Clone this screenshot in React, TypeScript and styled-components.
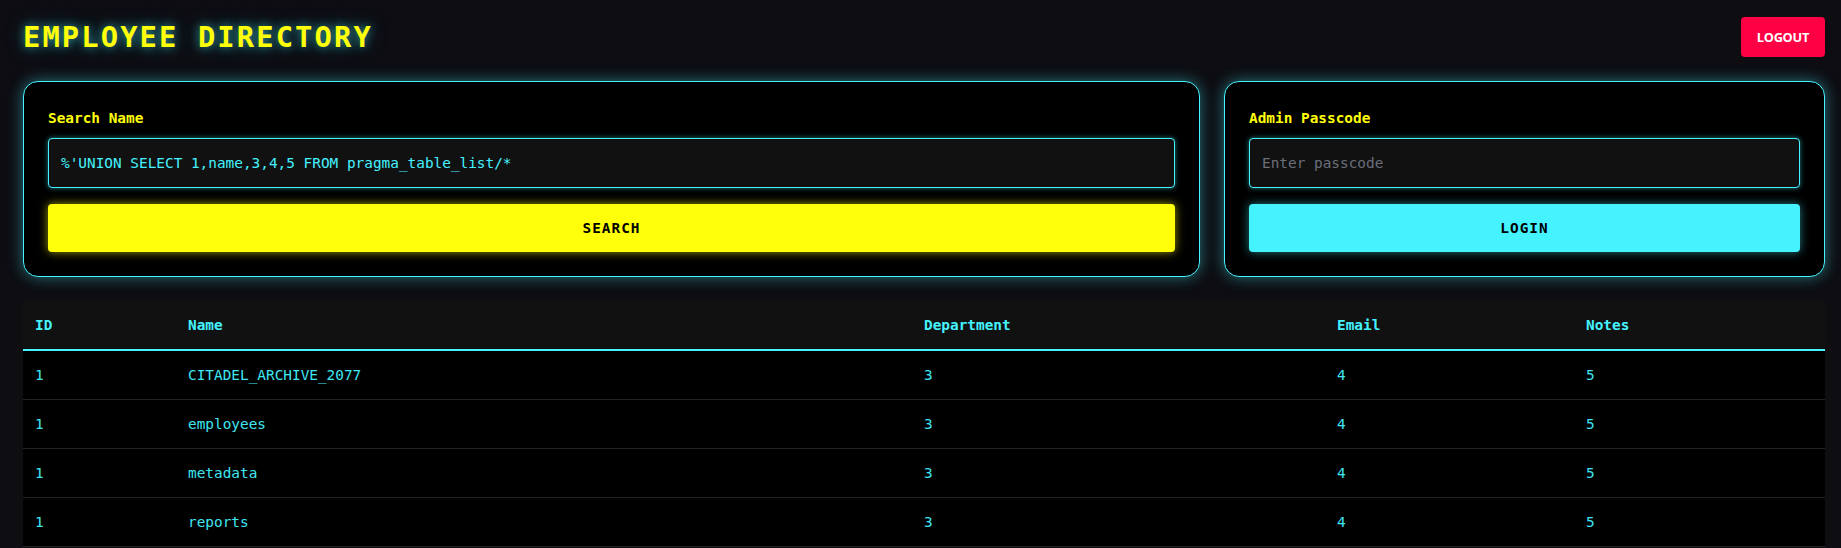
import React from "react";
import styled, { createGlobalStyle, css } from "styled-components";

const CYAN = "#45f3ff";
const YELLOW = "#ffff0a";
const RED = "#ff0044";

const GlobalStyle = createGlobalStyle`
  html, body {
    margin: 0;
    padding: 0;
    background: #0d0d12;
  }
  body {
    font-family: "DejaVu Sans Mono", monospace;
    color: ${CYAN};
  }
  * { box-sizing: border-box; }
`;

const Page = styled.div`
  padding: 17px 16px 24px 23px;
`;

const TopBar = styled.header`
  display: flex;
  align-items: center;
  justify-content: space-between;
  margin-bottom: 24px;
`;

const Title = styled.h1`
  margin: 0;
  font-family: "DejaVu Sans Mono", monospace;
  font-size: 28.8px;
  font-weight: 700;
  letter-spacing: 2.1px;
  color: ${YELLOW};
  line-height: 1.2;
  text-shadow: 0 0 10px rgba(69, 243, 255, 0.6), 0 0 22px rgba(69, 243, 255, 0.3);
`;

const LogoutButton = styled.button`
  height: 40px;
  padding: 0 16px;
  border: none;
  border-radius: 4px;
  background: ${RED};
  color: #fff;
  font-family: "Open Sans", sans-serif;
  font-size: 12.8px;
  font-weight: 700;
  letter-spacing: -0.3px;
  cursor: pointer;
`;

const Panels = styled.section`
  display: grid;
  grid-template-columns: 1177fr 601fr;
  gap: 24px;
`;

const Card = styled.div`
  background: #000;
  border: 1px solid ${CYAN};
  border-radius: 15px;
  padding: 24px;
  box-shadow: 0 0 15px rgba(69, 243, 255, 0.45);
`;

const Label = styled.label`
  display: block;
  font-size: 14.4px;
  font-weight: 700;
  line-height: 24px;
  color: ${YELLOW};
  margin-bottom: 8px;
`;

const Input = styled.input`
  display: block;
  width: 100%;
  padding: 14px 12px;
  border: 1px solid ${CYAN};
  border-radius: 4px;
  background: #111;
  color: ${CYAN};
  font-family: "DejaVu Sans Mono", monospace;
  font-size: 14.4px;
  line-height: 20px;
  outline: none;
  box-shadow: 0 0 5px rgba(69, 243, 255, 0.5);
  &::placeholder {
    color: #6b6f7a;
  }
`;

const ActionButton = styled.button<{ $variant: "yellow" | "cyan" }>`
  display: block;
  width: 100%;
  height: 48px;
  margin-top: 16px;
  border: none;
  border-radius: 4px;
  color: #000;
  font-family: "DejaVu Sans Mono", monospace;
  font-size: 14.4px;
  font-weight: 700;
  letter-spacing: 1px;
  cursor: pointer;
  ${(p) =>
    p.$variant === "yellow"
      ? css`
          background: ${YELLOW};
          box-shadow: 0 0 10px rgba(255, 255, 10, 0.6);
        `
      : css`
          background: ${CYAN};
          box-shadow: 0 0 10px rgba(69, 243, 255, 0.5);
        `}
`;

const Table = styled.table`
  width: 100%;
  margin-top: 24px;
  border-collapse: collapse;
  background: #000;
  font-size: 14.4px;
  line-height: 18px;
`;

const HeadCell = styled.th<{ $w?: number }>`
  text-align: left;
  padding: 15px 12px 15px;
  background: #111;
  color: ${CYAN};
  font-weight: 700;
  border-bottom: 2px solid ${CYAN};
  ${(p) => (p.$w ? `width: ${p.$w}px;` : "")}
`;

const Row = styled.tr`
  border-bottom: 1px solid #222;
`;

const Cell = styled.td`
  padding: 15px 12px 14px;
  line-height: 19px;
  color: #3fe6f2;
`;

const columns: { name: string; w?: number }[] = [
  { name: "ID", w: 153 },
  { name: "Name", w: 736 },
  { name: "Department", w: 413 },
  { name: "Email", w: 249 },
  { name: "Notes" },
];

const rows = [
  ["1", "CITADEL_ARCHIVE_2077", "3", "4", "5"],
  ["1", "employees", "3", "4", "5"],
  ["1", "metadata", "3", "4", "5"],
  ["1", "reports", "3", "4", "5"],
];

export default function App() {
  return (
    <>
      <GlobalStyle />
      <Page>
        <TopBar>
          <Title>EMPLOYEE DIRECTORY</Title>
          <LogoutButton>LOGOUT</LogoutButton>
        </TopBar>
        <Panels>
          <Card>
            <Label>Search Name</Label>
            <Input defaultValue="%'UNION SELECT 1,name,3,4,5 FROM pragma_table_list/*" />
            <ActionButton $variant="yellow">SEARCH</ActionButton>
          </Card>
          <Card>
            <Label>Admin Passcode</Label>
            <Input type="password" placeholder="Enter passcode" />
            <ActionButton $variant="cyan">LOGIN</ActionButton>
          </Card>
        </Panels>
        <Table>
          <thead>
            <tr>
              {columns.map((c) => (
                <HeadCell key={c.name} $w={c.w}>
                  {c.name}
                </HeadCell>
              ))}
            </tr>
          </thead>
          <tbody>
            {rows.map((r, i) => (
              <Row key={i}>
                {r.map((v, j) => (
                  <Cell key={j}>{v}</Cell>
                ))}
              </Row>
            ))}
          </tbody>
        </Table>
      </Page>
    </>
  );
}
